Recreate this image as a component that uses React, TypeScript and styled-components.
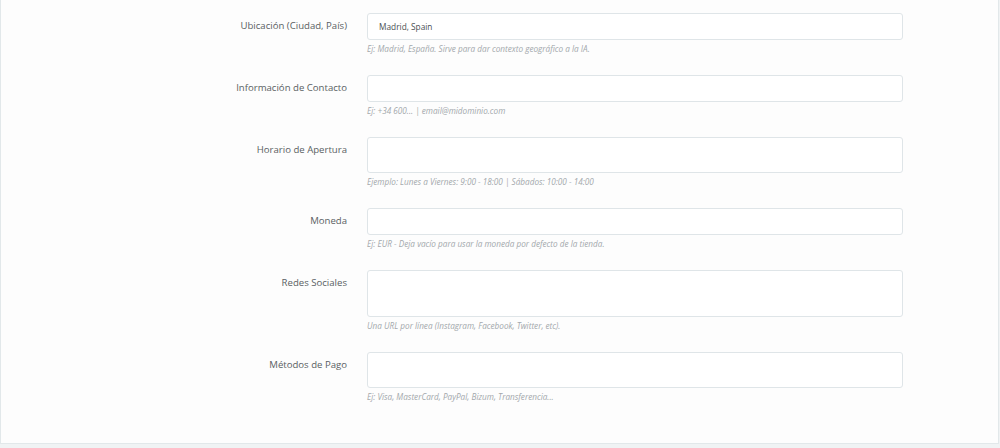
import React from "react";
import styled, { createGlobalStyle } from "styled-components";

const Global = createGlobalStyle`
  html, body { margin: 0; padding: 0; background: #f0f3f4; }
  body { font-family: "Open Sans", "Noto Sans", sans-serif; }
  * { box-sizing: border-box; }
`;

const Page = styled.div`
  width: 1000px;
  height: 448px;
  padding: 0 1px 4px 0;
  background: #f0f3f4;
`;

const Panel = styled.div`
  background: #fdfdfd;
  border: 1px solid #e2e8ea;
  border-top: none;
  height: 444px;
  padding-top: 13px;
`;

const Form = styled.div`
  display: grid;
  grid-template-columns: 346px 536px;
  column-gap: 20px;
`;

const Label = styled.label`
  text-align: right;
  font-size: 9.6px;
  line-height: 15px;
  padding-top: 5px;
  color: #5a5f63;
`;

const Field = styled.div`
  display: flex;
  flex-direction: column;
  padding-bottom: 20px;
`;

const Input = styled.div<{ $h: number }>`
  height: ${(p) => p.$h}px;
  border: 1px solid #dfe5e8;
  border-radius: 3px;
  background: #ffffff;
  font-size: 8.3px;
  color: #4a4f53;
  padding: 0 11px;
  display: flex;
  align-items: center;
`;

const Help = styled.div`
  margin-top: 2px;
  font-size: 8.2px;
  line-height: 13px;
  font-style: italic;
  color: #a3a8ac;
`;

const rows = [
  { label: "Ubicación (Ciudad, País)", h: 27, value: "Madrid, Spain", help: "Ej: Madrid, España. Sirve para dar contexto geográfico a la IA." },
  { label: "Información de Contacto", h: 27, value: "", help: "Ej: +34 600... | email@midominio.com" },
  { label: "Horario de Apertura", h: 36, value: "", help: "Ejemplo: Lunes a Viernes: 9:00 - 18:00 | Sábados: 10:00 - 14:00" },
  { label: "Moneda", h: 27, value: "", help: "Ej: EUR - Deja vacío para usar la moneda por defecto de la tienda." },
  { label: "Redes Sociales", h: 47, value: "", help: "Una URL por línea (Instagram, Facebook, Twitter, etc)." },
  { label: "Métodos de Pago", h: 36, value: "", help: "Ej: Visa, MasterCard, PayPal, Bizum, Transferencia..." },
];

export default function App() {
  return (
    <Page>
      <Global />
      <Panel>
        <Form>
          {rows.map((r) => (
            <React.Fragment key={r.label}>
              <Label>{r.label}</Label>
              <Field>
                <Input $h={r.h}>{r.value}</Input>
                <Help>{r.help}</Help>
              </Field>
            </React.Fragment>
          ))}
        </Form>
      </Panel>
    </Page>
  );
}
